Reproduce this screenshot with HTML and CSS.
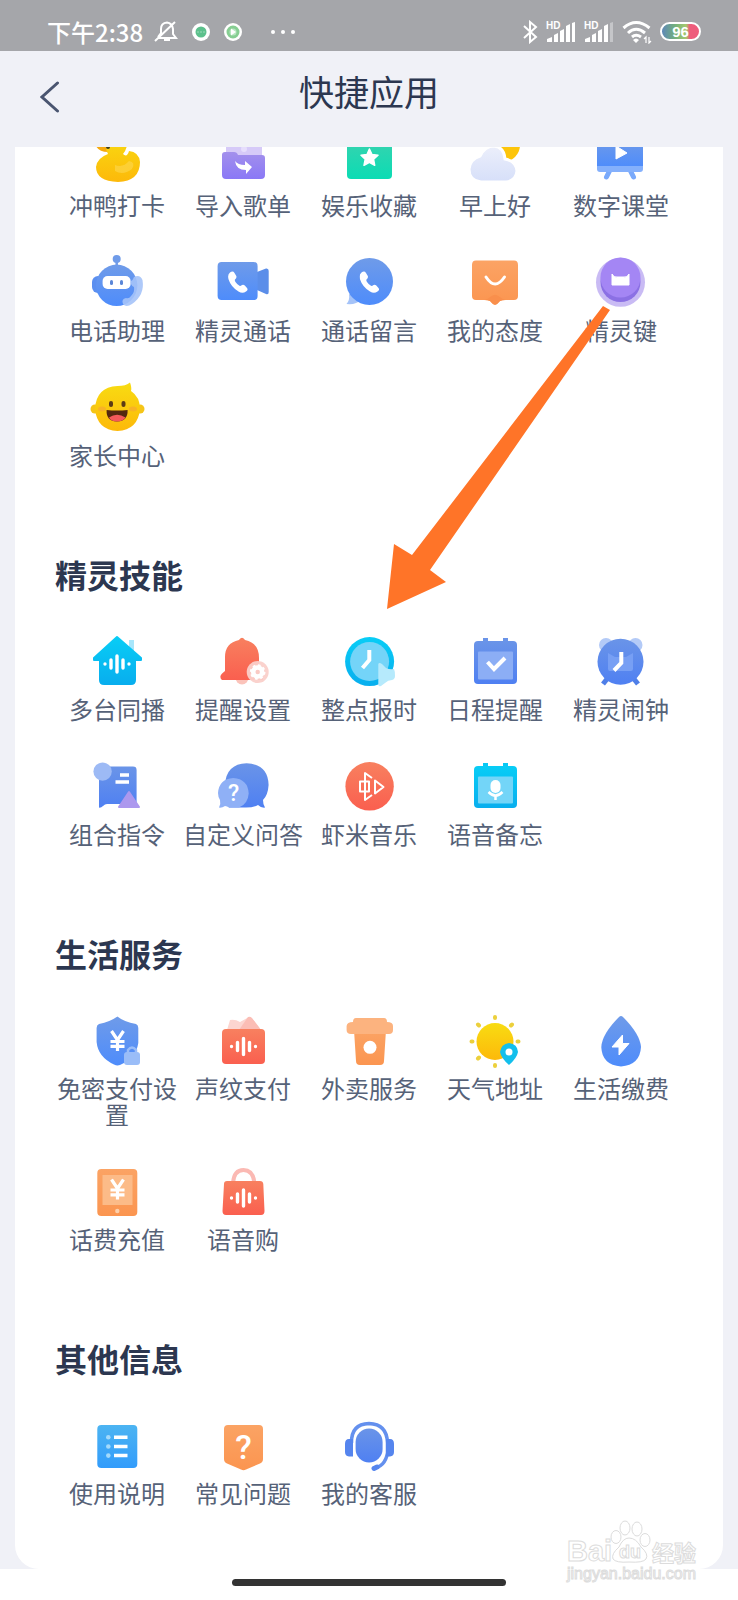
FILE: index.html
```html
<!DOCTYPE html>
<html lang="zh-CN">
<head>
    <meta charset="UTF-8">
    <meta name="viewport" content="width=device-width, initial-scale=1.0">
    <title>快捷应用</title>
    <link rel="stylesheet" href="styles.css">
</head>
<body>
    <!-- Shared gradients and symbols -->
    <svg class="defs" width="0" height="0" aria-hidden="true">
        <defs>
            <linearGradient id="blue" x1="0" y1="0" x2="0" y2="1"><stop offset="0" stop-color="#6f9be9"/><stop offset="1" stop-color="#4e8cfb"/></linearGradient>
            <linearGradient id="indigo" x1="0" y1="0" x2="0" y2="1"><stop offset="0" stop-color="#6a94e8"/><stop offset="1" stop-color="#4f80f2"/></linearGradient>
            <linearGradient id="cyan" x1="0" y1="0" x2="0" y2="1"><stop offset="0" stop-color="#08cdf6"/><stop offset="1" stop-color="#08aeee"/></linearGradient>
            <linearGradient id="sky" x1="0" y1="0" x2="0" y2="1"><stop offset="0" stop-color="#4cb4f2"/><stop offset="1" stop-color="#329cfb"/></linearGradient>
            <linearGradient id="red" x1="0" y1="0" x2="0" y2="1"><stop offset="0" stop-color="#f8805f"/><stop offset="1" stop-color="#fa5f4f"/></linearGradient>
            <linearGradient id="orange" x1="0" y1="0" x2="0" y2="1"><stop offset="0" stop-color="#fba364"/><stop offset="1" stop-color="#fb9550"/></linearGradient>
            <linearGradient id="yellow" x1="0" y1="0" x2="0" y2="1"><stop offset="0" stop-color="#f8dc12"/><stop offset="1" stop-color="#fdb90a"/></linearGradient>
            <linearGradient id="purple" x1="0" y1="0" x2="0" y2="1"><stop offset="0" stop-color="#a390ec"/><stop offset="1" stop-color="#8a78f6"/></linearGradient>
            <linearGradient id="green" x1="0" y1="0" x2="0" y2="1"><stop offset="0" stop-color="#3ad2ae"/><stop offset="1" stop-color="#0bdcb4"/></linearGradient>
            <linearGradient id="cloud" x1="0" y1="0" x2="0" y2="1"><stop offset="0" stop-color="#eceffb"/><stop offset="1" stop-color="#d6dff9"/></linearGradient>
        </defs>
        <symbol id="phone" viewBox="0 0 20 22">
            <path fill="#fff" d="M2 1.500Q5-.5 6.500 2L8.300 5Q9 7 7 8.500Q6.500 9.500 7.500 11Q9.500 14 11.500 14.800Q12.500 15.200 14 14Q15.500 13.200 16.800 14.500L19 17Q20.500 19 18 20.500Q14.500 23 10.500 20.500Q3 16 .6 8.500Q-.8 3.500 2 1.500Z"/>
        </symbol>
        <symbol id="wave" viewBox="0 0 28 20">
            <path stroke="#fff" stroke-width="3.400" stroke-linecap="round" fill="none" d="M2 9.900v.2M8 6v8M14 2v16M20 6v8M26 9.900v.2"/>
        </symbol>
        <symbol id="yuan" viewBox="0 0 18 22">
            <path stroke="#fff" stroke-width="3.200" fill="none" d="M3 1L9 10L15 1M9 9V21M2 11.500H16M2 16.300H16"/>
        </symbol>
        <symbol id="signal" viewBox="0 0 30 22">
            <path fill="#fff" d="M1 18l5-2v5H1zM8 14l4-2v9H8zM14 10l4-2v13h-4zM20 5l4-2v18h-4z"/>
        </symbol>
    </svg>

    <div class="status-bar">
        <div class="status-left">
            <span class="time">下午2:38</span>
            <svg width="24" height="24" viewBox="0 0 24 24" fill="none" stroke="#fff" stroke-width="2">
                <path d="M5 18h17l-3-4V9Q18 3 13 2.500Q7 3 7 9v4l-3 4M1 21L21 2M10 20h6"/>
            </svg>
            <svg width="18" height="18" viewBox="0 0 18 18">
                <circle cx="9" cy="9" r="9" fill="#fff"/><circle cx="9" cy="9" r="5.500" fill="#5cc08c"/>
                <path d="M5.500 9h1M8.500 9h1M11.500 9h1" stroke="#d8f3e4"/>
            </svg>
            <svg width="18" height="18" viewBox="0 0 18 18">
                <circle cx="9" cy="9" r="9" fill="#fff"/><circle cx="9" cy="9" r="5" fill="#b9e6c2" stroke="#86ce92" stroke-width="3"/><path d="M7 5.500l5 3.500l-5 3.500z" fill="#fff"/>
            </svg>
            <svg class="dots" width="24" height="6" viewBox="0 0 24 6" fill="#fff"><circle cx="2" cy="3" r="2"/><circle cx="12" cy="3" r="2"/><circle cx="22" cy="3" r="2"/></svg>
        </div>
        <div class="status-right">
            <svg width="16" height="24" viewBox="0 0 16 24" fill="none" stroke="#fff" stroke-width="2"><path d="M2 6l12 11l-6 5V2l6 5L2 18"/></svg>
            <div class="signal">
                <small>HD</small>
                <svg width="30" height="22"><use href="#signal"/><path d="M26 2l3-1v20h-3z" fill="#fff"/></svg>
            </div>
            <div class="signal">
                <small>HD</small>
                <svg width="30" height="22"><use href="#signal"/><path d="M26 2l3-1v20h-3z" fill="#c5c6c9"/></svg>
            </div>
            <svg width="30" height="24" viewBox="0 0 30 24" fill="none" stroke="#fff" stroke-width="3">
                <path d="M1.500 8Q14 -3 27.500 8M6 13Q14 5.500 23 13M10 17Q14 13.500 19 17"/>
                <path d="M11 20l3 3l3-3q-3-3-6 0z" fill="#fff" stroke="none"/>
                <path d="M24 23v-6l-2 2M27 17v6l2-2" stroke-width="1.200"/>
            </svg>
            <span class="battery">96</span>
        </div>
    </div>

    <header class="header">
        <button class="back" type="button" aria-label="返回">
            <svg width="20" height="32" viewBox="0 0 20 32" fill="none" stroke="#4a5570" stroke-width="3" stroke-linecap="round"><path d="M17.500 2L2 16L17.500 30"/></svg>
        </button>
        <h1>快捷应用</h1>
    </header>

    <main class="card">
        <ul class="grid scrolled">
            <li><a href="#">
                <svg viewBox="0 0 56 56">
                    <path fill="#f6a90e" d="M18 16L7 17Q10 23 19 23Z"/>
                    <path fill="url(#yellow)" d="M17 12Q18 4 28 4Q38 5 38 15Q38 20 34 25Q38 29 40 22Q50 23 51 33Q51 52 29 53Q7 52 7 38Q8 29 19 25Q16 20 17 12Z"/>
                    <path fill="#fed750" opacity=".6" d="M26 36Q34 39 40 32Q47 33 43 40Q34 47 26 42Z"/>
                    <circle cx="19" cy="18" r="2" fill="#3c3a1c"/>
                </svg>
                <span>冲鸭打卡</span>
            </a></li>
            <li><a href="#">
                <svg viewBox="0 0 56 56">
                    <path fill="#d6caf8" d="M11 8H47V30H11Z"/>
                    <circle cx="29" cy="20" r="3" fill="#e6defc"/>
                    <path fill="url(#purple)" d="M7 26Q7 23 10 23H19Q22 23 23 26H47Q50 26 50 29V46Q50 50 46 50H11Q7 50 7 46Z"/>
                    <path fill="#fff" d="M20 32Q23 36 30 36V32L37 38L31 45V41Q21 41 20 32Z"/>
                </svg>
                <span>导入歌单</span>
            </a></li>
            <li><a href="#">
                <svg viewBox="0 0 56 56">
                    <rect x="6" y="8" width="45" height="42" rx="4" fill="url(#green)"/>
                    <path fill="#fff" stroke="#fff" stroke-width="1.500" stroke-linejoin="round" d="M28.400 20L31 25.500L37 26.300L32.600 30.300L33.700 36.300L28.400 33.400L23 36.300L24.200 30.300L20 26.300L26 25.500Z"/>
                </svg>
                <span>娱乐收藏</span>
            </a></li>
            <li><a href="#">
                <svg viewBox="0 0 56 56">
                    <circle cx="36" cy="16" r="17" fill="#fdc50a"/>
                    <path fill="url(#cloud)" stroke="#fff" stroke-width="3" d="M14 53Q2 52 2 40Q3 30 13 27Q18 17 27 17Q37 18 38 30Q49 32 50 42Q49 52 39 53Z"/>
                </svg>
                <span>早上好</span>
            </a></li>
            <li><a href="#">
                <svg viewBox="0 0 56 56">
                    <path d="M16.500 42L13.500 48M37.500 42L40.500 48" stroke="#79a9fb" stroke-width="5" stroke-linecap="round"/>
                    <path fill="url(#blue)" d="M4 10H50V38H4Z"/>
                    <path fill="#84b0fc" d="M4 37H50V40Q50 43 47 43H7Q4 43 4 40Z"/>
                    <path fill="#fff" stroke="#fff" stroke-linejoin="round" d="M23 17L34 24L23 30Z"/>
                </svg>
                <span>数字课堂</span>
            </a></li>
            <li><a href="#">
                <svg viewBox="0 0 56 56">
                    <path stroke="#6f9be9" stroke-width="2.500" d="M27.700 4V12"/>
                    <circle cx="27.700" cy="5" r="4" fill="#6f9be9"/>
                    <rect x="3" y="22" width="12" height="17" rx="6" fill="#5b8ff0"/>
                    <circle cx="27.700" cy="31.300" r="20.700" fill="url(#blue)"/>
                    <rect x="13.600" y="22" width="28" height="13" rx="5" fill="#fff"/>
                    <rect x="21" y="26" width="3" height="5" rx="1.500" fill="#5b87d8"/><rect x="31" y="26" width="3" height="5" rx="1.500" fill="#5b87d8"/>
                    <path fill="#a5c3f8" opacity=".9" d="M45 23Q51 20 53.500 26Q56 41 43 50Q37 54 34 50Q32 45 37 44Q40 45 42 42Q46 38 45 33Q41 31 42 27Q44 26 45 23Z"/>
                </svg>
                <span>电话助理</span>
            </a></li>
            <li><a href="#">
                <svg viewBox="0 0 56 56">
                    <path fill="#5b8ee9" d="M42 18L51 14.500Q53.700 14 53.700 17V38Q53.700 41 51 40L42 36Z"/>
                    <rect x="2.600" y="8" width="40" height="38" rx="4" fill="url(#blue)"/>
                    <use href="#phone" x="13" y="17" width="20" height="22"/>
                </svg>
                <span>精灵通话</span>
            </a></li>
            <li><a href="#">
                <svg viewBox="0 0 56 56">
                    <path fill="#a5c3f8" d="M8 40Q9 46 5.500 50Q15 51 20 46Z"/>
                    <circle cx="28.500" cy="27.500" r="23.500" fill="url(#blue)"/>
                    <use href="#phone" x="18.500" y="17" width="20" height="22"/>
                </svg>
                <span>通话留言</span>
            </a></li>
            <li><a href="#">
                <svg viewBox="0 0 56 56">
                    <path fill="url(#orange)" d="M9 6.600H47Q51 6.600 51 11V42Q51 46 47 46H38Q35 46 33 47L30 50Q28 51.500 26 50L23 47Q21 46 18 46H9Q5 46 5 42V11Q5 6.600 9 6.600Z"/>
                    <path fill="#f98f4c" d="M17 46Q21 45 24 42.500Q28 39 32 42.500Q35 45 39 46Q35 46 33 47L30 50Q28 51.500 26 50L23 47Q21 46 17 46Z"/>
                    <path stroke="#fff" stroke-width="3" stroke-linecap="round" fill="none" d="M19 23Q28 37 37.500 23"/>
                </svg>
                <span>我的态度</span>
            </a></li>
            <li><a href="#">
                <svg viewBox="0 0 56 56">
                    <circle cx="27.500" cy="28.300" r="24.500" fill="#c9bbf4"/>
                    <circle cx="27.500" cy="28" r="20" fill="#8b70e4"/>
                    <circle cx="27.500" cy="23.500" r="20" fill="#a486f4"/>
                    <path fill="#fff" stroke="#fff" stroke-linejoin="round" d="M19 20Q21 24 24 23H31Q34 24 36 20V31H19Z"/>
                </svg>
                <span>精灵键</span>
            </a></li>
            <li><a href="#">
                <svg viewBox="0 0 56 56">
                    <circle cx="6" cy="30" r="4.500" fill="#f5c518"/><circle cx="51" cy="30" r="4.500" fill="#f5c518"/>
                    <path fill="url(#yellow)" d="M28.500 7Q37 7 41 3.500Q43 9 42 12Q51 18 51 30Q49 51 28.500 52Q8 51 6 30Q7 8 28.500 7Z"/>
                    <ellipse cx="13" cy="30" rx="4" ry="2.500" fill="#f8b326"/><ellipse cx="44" cy="30" rx="4" ry="2.500" fill="#f8b326"/>
                    <rect x="20" y="22" width="4" height="6" rx="2" fill="#5c3b16"/><rect x="32.500" y="22" width="4" height="6" rx="2" fill="#5c3b16"/>
                    <path fill="#54270f" d="M17.600 31Q28 32 38.600 31Q39 42 28 42.600Q17 42 17.600 31Z"/>
                    <path fill="#f4595a" d="M20 38.500Q28 33 36.500 38.500Q34 42.500 28 42.600Q22 42.500 20 38.500Z"/>
                </svg>
                <span>家长中心</span>
            </a></li>
        </ul>

        <h2>精灵技能</h2>
        <ul class="grid">
            <li><a href="#">
                <svg viewBox="0 0 56 56">
                    <rect x="40" y="7" width="5" height="12" fill="#a8e6fb"/>
                    <path fill="url(#cyan)" stroke="url(#cyan)" stroke-width="2" stroke-linejoin="round" d="M28 4L52 25V27H46V47Q46 51 42 51H15Q11 51 11 47V27H5V25Z"/>
                    <use href="#wave" x="14" y="21" width="28" height="20"/>
                </svg>
                <span>多台同播</span>
            </a></li>
            <li><a href="#">
                <svg viewBox="0 0 56 56">
                    <circle cx="27" cy="45" r="6.500" fill="#fbc3ba"/>
                    <path fill="url(#red)" d="M27 4.700Q29 5 30 7Q44 10 44 25V35Q44 38 48 41V47H7Q5 46 5.500 43Q6 41 10 38V24Q10 10 24 7Q25 5 27 4.700Z"/>
                    <circle cx="42.700" cy="39" r="11" fill="#fad0ca" opacity=".95"/>
                    <circle cx="42.700" cy="39" r="4.500" fill="none" stroke="#fff" stroke-width="4.500"/>
                    <circle cx="42.700" cy="39" r="6.800" fill="none" stroke="#fff" stroke-width="2" stroke-dasharray="2.700 2.640"/>
                </svg>
                <span>提醒设置</span>
            </a></li>
            <li><a href="#">
                <svg viewBox="0 0 56 56">
                    <circle cx="28.600" cy="28.600" r="24.500" fill="url(#cyan)"/>
                    <circle cx="28.600" cy="28.600" r="19.500" fill="#74d4f8"/>
                    <path stroke="#fff" stroke-width="4" fill="none" d="M28.300 17V27L21.500 35"/>
                    <path fill="#b6eafc" d="M37.300 31Q38 29 41 31L45 35Q49 37 53 36Q54 38 54 43Q54 46 51 47Q47 47 44 50L40 53Q38 54 37.300 52Z"/>
                </svg>
                <span>整点报时</span>
            </a></li>
            <li><a href="#">
                <svg viewBox="0 0 56 56">
                    <path fill="#6a94e8" d="M16 5h5v7h-5zM36 5h5v7h-5z"/>
                    <rect x="7" y="8" width="43" height="43" rx="4" fill="url(#indigo)"/>
                    <rect x="11" y="18.500" width="35" height="28" rx="1" fill="#8caef5"/>
                    <path stroke="#fff" stroke-width="4" fill="none" d="M20.500 29L27 36L38 25"/>
                </svg>
                <span>日程提醒</span>
            </a></li>
            <li><a href="#">
                <svg viewBox="0 0 56 56">
                    <circle cx="13" cy="12" r="7" fill="#b3caf7"/><circle cx="42.500" cy="12" r="7" fill="#b3caf7"/>
                    <path stroke="#4f7fe8" stroke-width="5" d="M14 46L10 51M41 46L45 51"/>
                    <circle cx="27.500" cy="28.800" r="23" fill="url(#indigo)"/>
                    <path fill="#779ff4" d="M15 20L22 24H33L40 20V36Q40 38 38 38H17Q15 38 15 36Z"/>
                    <path stroke="#fff" stroke-width="4" fill="none" d="M28.300 19V30L21 37.500"/>
                </svg>
                <span>精灵闹钟</span>
            </a></li>
            <li><a href="#">
                <svg viewBox="0 0 56 56">
                    <path fill="url(#indigo)" d="M13 8.600H44Q47.600 8.600 47.600 12V46H18Q16 46 14 48Q12 50 10 49.600V12Z"/>
                    <circle cx="13.600" cy="13.600" r="9.200" fill="#9dbaf5"/>
                    <path stroke="#fff" stroke-width="3.400" d="M31 17H40M26.500 24H40"/>
                    <path fill="#ac98ee" stroke="#ac98ee" stroke-width="2" stroke-linejoin="round" d="M40 34L50 49H30Z"/>
                </svg>
                <span>组合指令</span>
            </a></li>
            <li><a href="#">
                <svg viewBox="0 0 56 56">
                    <path fill="url(#indigo)" d="M31.600 5.300Q53 6 53.600 27Q53 37 48 42Q48 47 50 49.600Q46 50 43 47Q38 49.600 31 49.600H14Q10 45 10 27Q11 6 31.600 5.300Z"/>
                    <path fill="#8fb0f6" d="M18.300 20Q33 21 33.700 35.500Q33 46 24 49.600H14Q12 48 10 48Q7 50 4 49.600Q6 46 5 42Q3 39 3 35Q4 21 18.300 20Z"/>
                    <text x="18.500" y="43" class="glyph small">?</text>
                </svg>
                <span>自定义问答</span>
            </a></li>
            <li><a href="#">
                <svg viewBox="0 0 56 56">
                    <circle cx="28.600" cy="28.300" r="24.200" fill="url(#red)"/>
                    <path stroke="#fff" stroke-width="2" fill="none" stroke-linejoin="round" d="M19 23.500H28V33.500H19ZM31 20L24 15V42L31 37M34 22.500L42.500 29L34 35.500Z"/>
                </svg>
                <span>虾米音乐</span>
            </a></li>
            <li><a href="#">
                <svg viewBox="0 0 56 56">
                    <path fill="#08c8f4" d="M16 5h5v7h-5zM36 5h5v7h-5z"/>
                    <rect x="7" y="8" width="43" height="42" rx="4" fill="url(#cyan)"/>
                    <rect x="11" y="18.500" width="35" height="27" rx="1" fill="#73d5f8"/>
                    <rect x="23.500" y="22" width="10" height="13" rx="5" fill="#fff"/>
                    <path stroke="#fff" stroke-width="2.500" fill="none" d="M21.500 34Q28.500 41 35.500 34M28.500 37V42"/>
                </svg>
                <span>语音备忘</span>
            </a></li>
        </ul>

        <h2>生活服务</h2>
        <ul class="grid">
            <li><a href="#">
                <svg viewBox="0 0 56 56">
                    <path fill="url(#blue)" d="M28.400 4.600Q35 10 47 12Q49.300 13 49.300 16V31Q47 46 31 53Q28 54 25 52.500Q9 45 7.600 30V16Q7.600 13 10 12Q21 10 28.400 4.600Z"/>
                    <use href="#yuan" x="19.500" y="18" width="18" height="22"/>
                    <path fill="none" stroke="#9abdf8" stroke-width="2.500" d="M39 41V38Q43 33 47 38V41"/>
                    <rect x="35" y="40" width="16" height="13" rx="3" fill="#9abdf8"/>
                </svg>
                <span>免密支付设置</span>
            </a></li>
            <li><a href="#">
                <svg viewBox="0 0 56 56">
                    <path fill="#fcd5d0" d="M12 18L15 8Q20 7 25 10L34 5Q38 6 46 18Z"/>
                    <path fill="#fbbdb5" d="M24 18L33 5Q35 4 37 6L46 18Z"/>
                    <rect x="7" y="17" width="43" height="35" rx="4" fill="url(#red)"/>
                    <use href="#wave" x="14.500" y="24.500" width="28" height="20"/>
                </svg>
                <span>声纹支付</span>
            </a></li>
            <li><a href="#">
                <svg viewBox="0 0 56 56">
                    <path fill="url(#orange)" d="M13 18H45L43 49Q43 53 39 53H19Q15 53 15 49Z"/>
                    <path fill="#fcb37f" d="M15 6H43Q46 6 46 10Q52 10 52 14V18Q52 22 48 22H10Q5.600 22 5.600 18V14Q6 10 12 10Q12 6 15 6Z"/>
                    <circle cx="29" cy="35.300" r="6.500" fill="#fff"/>
                </svg>
                <span>外卖服务</span>
            </a></li>
            <li><a href="#">
                <svg viewBox="0 0 56 56">
                    <circle cx="28" cy="29.500" r="18.500" fill="url(#yellow)"/>
                    <path stroke="#ecd03c" stroke-width="4" stroke-linecap="round" d="M28 5V6M28 53V54M4.500 29.500H5.500M50.500 29.500H51.500M11 12.500L12 13.500M44 13.500L45 12.500M11 46.500L12 45.500"/>
                    <path fill="#13bfec" d="M42 31Q50.500 32 51 40Q50 46 42 53Q34 46 33 40Q34 32 42 31Z"/>
                    <circle cx="42" cy="40" r="3.500" fill="#fff"/>
                </svg>
                <span>天气地址</span>
            </a></li>
            <li><a href="#">
                <svg viewBox="0 0 56 56">
                    <path fill="url(#blue)" d="M26 5Q28 3 30 5Q47 22 48 35Q47 53 28 54.500Q9 53 8.300 35Q9 22 26 5Z"/>
                    <path fill="#fff" stroke="#fff" stroke-linejoin="round" d="M29.500 23L19 35H26V43L36 31.500H29.500Z"/>
                </svg>
                <span>生活缴费</span>
            </a></li>
            <li><a href="#">
                <svg viewBox="0 0 56 56">
                    <rect x="8.300" y="6" width="40" height="47" rx="4" fill="url(#orange)"/>
                    <rect x="13.500" y="12" width="30" height="30" fill="#fcbb88"/>
                    <use href="#yuan" x="19.500" y="15.500" width="18" height="22"/>
                    <circle cx="28.300" cy="48" r="2.200" fill="#fdd0ac"/>
                </svg>
                <span>话费充值</span>
            </a></li>
            <li><a href="#">
                <svg viewBox="0 0 56 56">
                    <path stroke="#fbb9b3" stroke-width="4" fill="none" d="M18 20Q19 7 28.500 7Q38 7 39.500 20"/>
                    <path fill="url(#red)" d="M12 18H45Q48 18 48.300 21L49.500 48Q49.500 52 46 52H11Q7.500 52 7.500 48L9 21Q9 18 12 18Z"/>
                    <use href="#wave" x="14.500" y="25" width="28" height="20"/>
                </svg>
                <span>语音购</span>
            </a></li>
        </ul>

        <h2>其他信息</h2>
        <ul class="grid">
            <li><a href="#">
                <svg viewBox="0 0 56 56">
                    <rect x="8.300" y="8" width="40" height="43" rx="4" fill="url(#sky)"/>
                    <path stroke="#fff" stroke-width="3.500" d="M25 20.300H38.500M25 29.500H38.500M25 38.600H38.500"/>
                    <g fill="#a4dafb"><circle cx="19.300" cy="20.300" r="2.300"/><circle cx="19.300" cy="29.500" r="2.300"/><circle cx="19.300" cy="38.600" r="2.300"/></g>
                </svg>
                <span>使用说明</span>
            </a></li>
            <li><a href="#">
                <svg viewBox="0 0 56 56">
                    <path fill="url(#orange)" d="M13 8H44Q48 8 48 12V42Q48 45 45 46.500L31 52.500Q28.500 54 26 52.500L12 46.500Q9 45 9 42V12Q9 8 13 8Z"/>
                    <text x="28.500" y="42" class="glyph">?</text>
                </svg>
                <span>常见问题</span>
            </a></li>
            <li><a href="#">
                <svg viewBox="0 0 56 56">
                    <rect x="14.600" y="11.500" width="27" height="34" rx="13.500" fill="url(#indigo)"/>
                    <path stroke="#6490ee" stroke-width="3.500" fill="none" d="M10.500 26Q10 7 28 6.500Q46 7 46.500 26V36Q44 50 31.500 51.500"/>
                    <path stroke="#5585ee" stroke-width="5" stroke-linecap="round" d="M33 51.500L36 50"/>
                    <path fill="#5585ee" d="M12 22V39.500H8Q4 39 4 35V27Q4 22 8 22ZM45 22H49Q53 22 53 27V35Q53 39 49 39.500H45Z"/>
                </svg>
                <span>我的客服</span>
            </a></li>
        </ul>

        <!-- Pointer to 整点报时 -->
        <svg class="arrow" width="223" height="304" viewBox="0 0 223 304" aria-hidden="true">
            <path fill="#ff7428" d="M0 303L7 238L25 249L216 0L223 4L43 264L59 276Z"/>
        </svg>
    </main>

    <footer class="home-area">
        <div class="home-bar"></div>
        <svg class="watermark" width="136" height="68" viewBox="0 0 136 68">
            <text x="2" y="41" class="wm-latin">Bai</text>
            <g fill="#fff" stroke="#dcdcdc">
                <ellipse cx="51" cy="17" rx="5" ry="6.500"/><ellipse cx="60" cy="8" rx="5" ry="7"/><ellipse cx="72" cy="9" rx="5" ry="7"/><ellipse cx="80" cy="20" rx="5" ry="6.500"/>
                <path d="M64 18Q71 18 76 27Q84 34 81 39Q78 43 64 42Q51 43 48 39Q46 34 54 27Q58 18 64 18Z"/>
            </g>
            <text x="54" y="38" class="wm-du">du</text>
            <text x="87" y="41" class="wm-cn">经验</text>
            <text x="2" y="59" class="wm-url">jingyan.baidu.com</text>
        </svg>
    </footer>
</body>
</html>
```

FILE: styles.css
```css
* {
    box-sizing: border-box;
}
body {
    margin: 0;
    min-height: 100vh;
    display: flex;
    flex-direction: column;
    background-color: #f0f1f7;
    color: #2c3750;
    font-family: "Noto Sans CJK SC", "Noto Sans", sans-serif;
}
svg {
    display: block;
    flex-shrink: 0;
}
.defs {
    position: absolute;
}

/* Status bar */
.status-bar {
    display: flex;
    justify-content: space-between;
    align-items: center;
    height: 51px;
    padding: 12px 37px 0 47px;
    background-color: #a5a6aa;
    color: #fff;
}
.status-left {
    display: flex;
    align-items: center;
    gap: 14px;
}
.time {
    font-size: 24px;
    line-height: 28px;
    font-weight: 500;
    margin-right: -3px;
}
.dots {
    margin-left: 15px;
}
.status-right {
    display: flex;
    align-items: center;
    gap: 8px;
}
.signal {
    position: relative;
}
.signal small {
    position: absolute;
    left: 0;
    top: 0;
    font: bold 10px/10px "Liberation Sans", sans-serif;
}
.battery {
    width: 41px;
    height: 19px;
    border: 2px solid #fff;
    border-radius: 10px;
    background: linear-gradient(90deg, #5f88b8, #73b07c 35%, #a5c96e 65%, #ee5c7c 75%);
    font: bold 15px/15px "Liberation Sans", sans-serif;
    text-align: center;
}

/* Header */
.header {
    display: grid;
    grid-template-columns: 98px 1fr 98px;
    align-items: center;
    height: 96px;
    padding-bottom: 16px;
}
.back {
    display: flex;
    padding: 12px 0 0 40px;
    border: none;
    background: none;
    cursor: pointer;
}
h1 {
    margin: 0;
    font-size: 35px;
    line-height: 48px;
    font-weight: 400;
    text-align: center;
}

/* Card with the app lists */
.card {
    position: relative;
    margin: 0 15px;
    padding: 0 39px 63px;
    background-color: #fff;
    border-radius: 0 0 24px 24px;
    overflow: hidden;
}
h2 {
    margin: 86px 0 39px;
    padding: 0 1px;
    font-size: 32px;
    line-height: 40px;
    font-weight: 700;
}
.grid {
    display: grid;
    grid-template-columns: repeat(5, 1fr);
    row-gap: 36px;
    margin: 0;
    padding: 0;
    list-style: none;
}
/* the list is scrolled a little under the header */
.scrolled {
    margin-top: -18px;
}
.grid a {
    display: flex;
    flex-direction: column;
    align-items: center;
    gap: 7px;
    color: #566278;
    font-size: 24px;
    line-height: 26px;
    text-align: center;
    text-decoration: none;
}
.grid svg {
    width: 56px;
    height: 56px;
}
.glyph {
    fill: #fff;
    font-family: Roboto, sans-serif;
    font-size: 34px;
    font-weight: 500;
    text-anchor: middle;
}
.glyph.small {
    font-size: 23px;
}
.arrow {
    position: absolute;
    left: 372px;
    top: 159px;
}

/* Home indicator */
.home-area {
    position: relative;
    flex-grow: 1;
    display: flex;
    justify-content: center;
    min-height: 31px;
    padding-top: 10px;
    background-color: #fff;
}
.home-bar {
    width: 37%;
    height: 7px;
    border-radius: 4px;
    background-color: #333;
}
.watermark {
    position: absolute;
    right: 37px;
    bottom: 12px;
}
.watermark text {
    fill: #fff;
    stroke: #dcdcdc;
    stroke-width: 1px;
    font-family: "Liberation Sans", sans-serif;
    font-weight: 700;
}
.wm-latin {
    font-size: 29px;
}
.wm-du {
    font-size: 18px;
}
.watermark .wm-cn {
    font-family: "Noto Sans CJK SC", sans-serif;
    font-size: 22px;
}
.watermark .wm-url {
    font-size: 16px;
    font-weight: 400;
}
```
